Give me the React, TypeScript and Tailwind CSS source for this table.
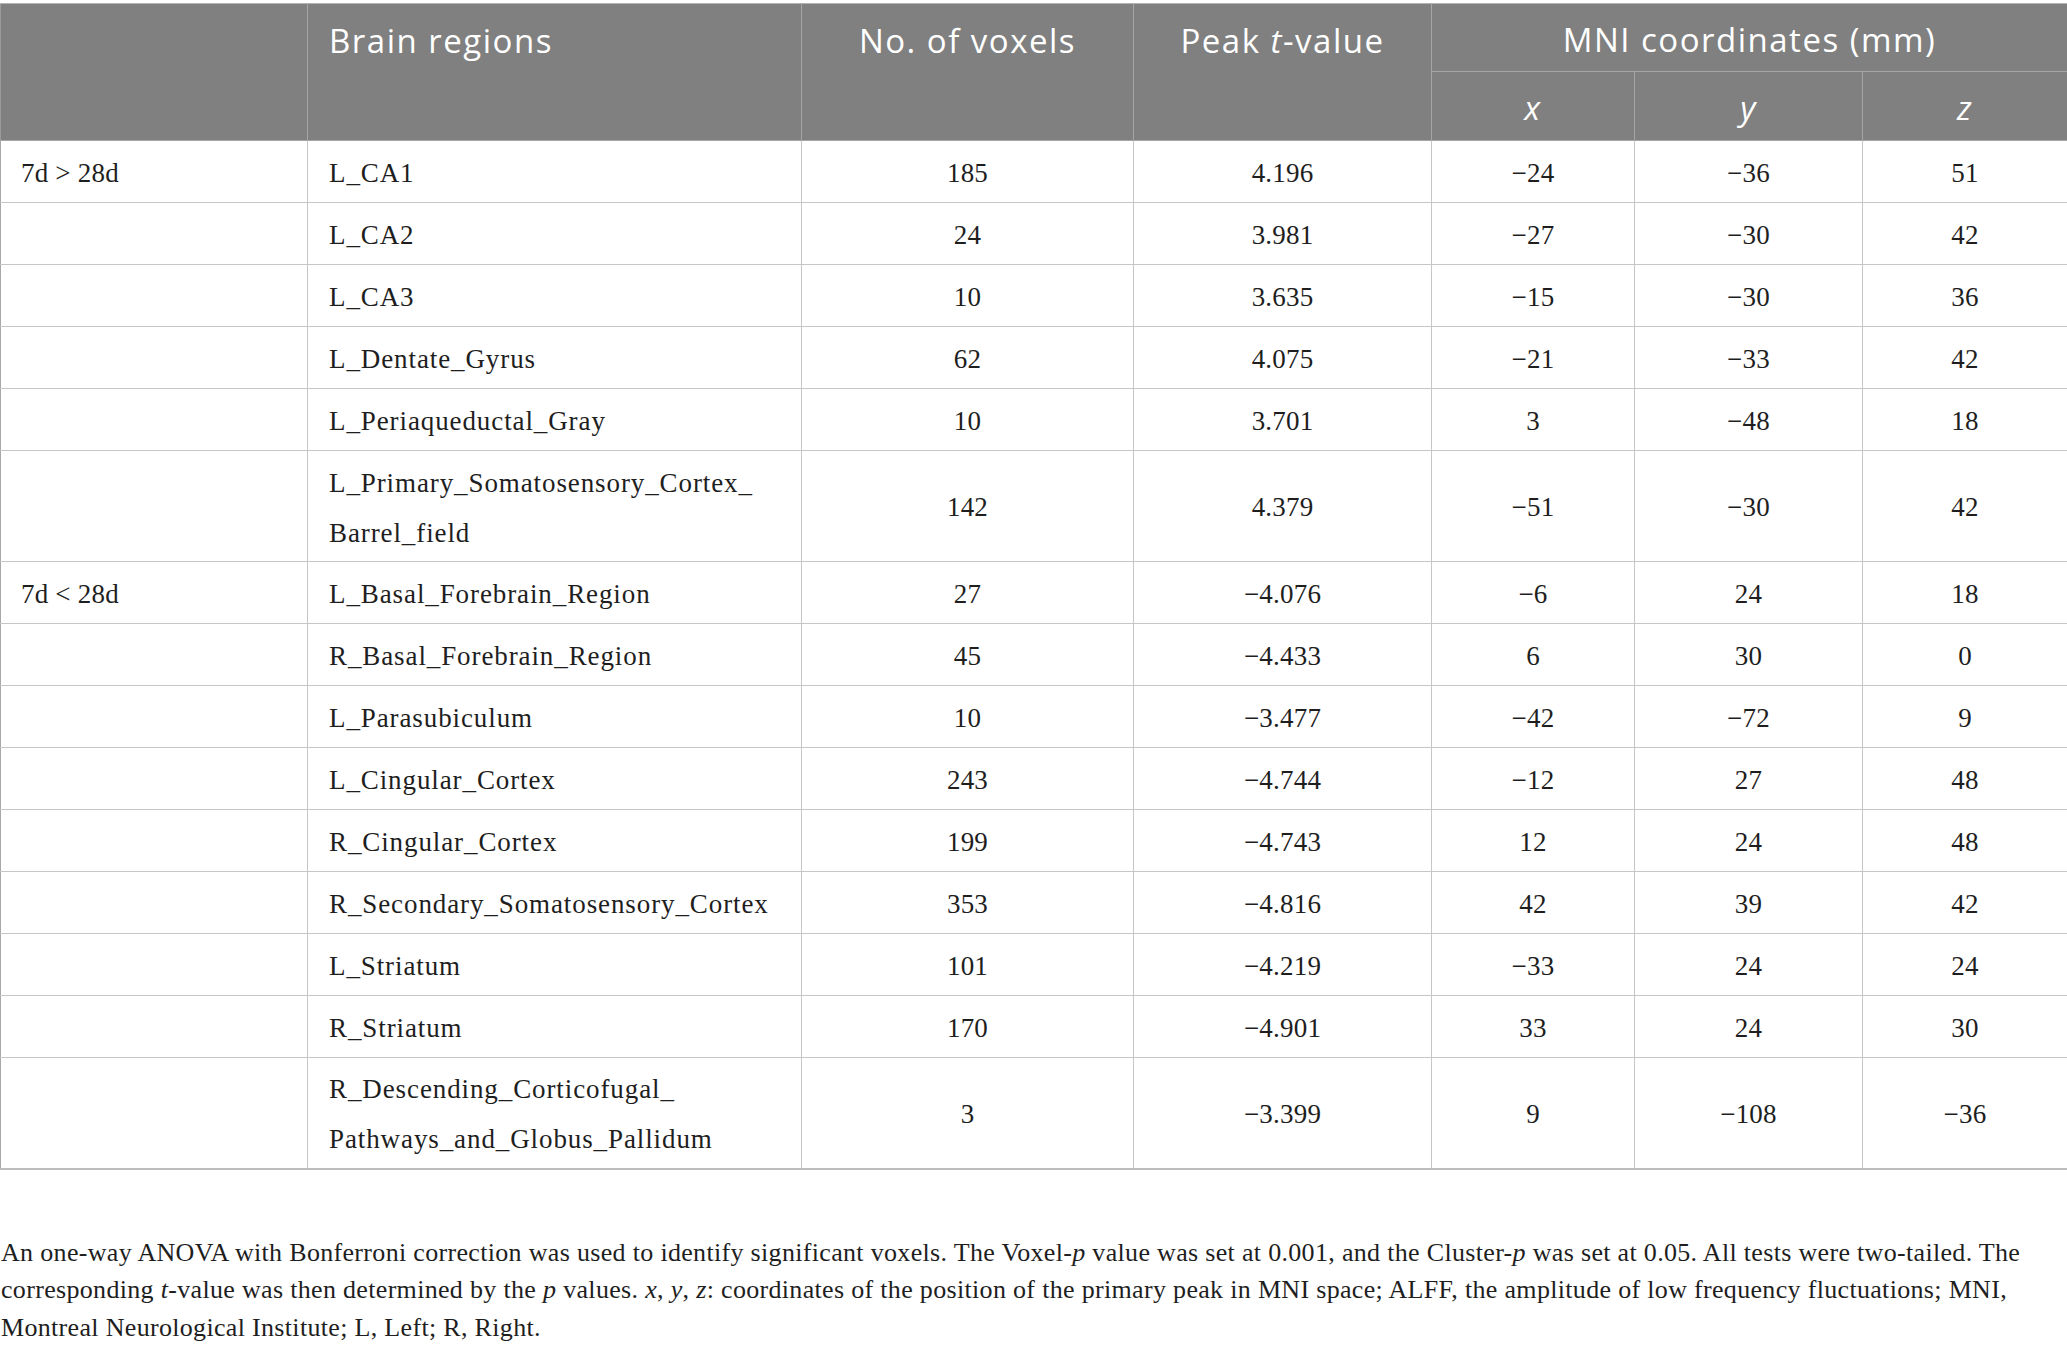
const rows = [
  { g: "7d > 28d", r: ["L_CA1"], n: "185", t: "4.196", x: "−24", y: "−36", z: "51" },
  { g: "", r: ["L_CA2"], n: "24", t: "3.981", x: "−27", y: "−30", z: "42" },
  { g: "", r: ["L_CA3"], n: "10", t: "3.635", x: "−15", y: "−30", z: "36" },
  { g: "", r: ["L_Dentate_Gyrus"], n: "62", t: "4.075", x: "−21", y: "−33", z: "42" },
  { g: "", r: ["L_Periaqueductal_Gray"], n: "10", t: "3.701", x: "3", y: "−48", z: "18" },
  { g: "", r: ["L_Primary_Somatosensory_Cortex_", "Barrel_field"], n: "142", t: "4.379", x: "−51", y: "−30", z: "42" },
  { g: "7d < 28d", r: ["L_Basal_Forebrain_Region"], n: "27", t: "−4.076", x: "−6", y: "24", z: "18" },
  { g: "", r: ["R_Basal_Forebrain_Region"], n: "45", t: "−4.433", x: "6", y: "30", z: "0" },
  { g: "", r: ["L_Parasubiculum"], n: "10", t: "−3.477", x: "−42", y: "−72", z: "9" },
  { g: "", r: ["L_Cingular_Cortex"], n: "243", t: "−4.744", x: "−12", y: "27", z: "48" },
  { g: "", r: ["R_Cingular_Cortex"], n: "199", t: "−4.743", x: "12", y: "24", z: "48" },
  { g: "", r: ["R_Secondary_Somatosensory_Cortex"], n: "353", t: "−4.816", x: "42", y: "39", z: "42" },
  { g: "", r: ["L_Striatum"], n: "101", t: "−4.219", x: "−33", y: "24", z: "24" },
  { g: "", r: ["R_Striatum"], n: "170", t: "−4.901", x: "33", y: "24", z: "30" },
  { g: "", r: ["R_Descending_Corticofugal_", "Pathways_and_Globus_Pallidum"], n: "3", t: "−3.399", x: "9", y: "−108", z: "−36" },
];

export default function App() {
  return (
    <div className="bg-white w-[2067px] min-h-[1348px] pt-[3px] font-['Liberation_Serif',serif] text-[#1e1e1e]">
      <table className="table-fixed border-collapse w-[2067px]">
        <colgroup>
          <col className="w-[307px]" />
          <col className="w-[494px]" />
          <col className="w-[332px]" />
          <col className="w-[298px]" />
          <col className="w-[203px]" />
          <col className="w-[228px]" />
          <col className="w-[205px]" />
        </colgroup>
        <thead className="bg-[#7f807f] text-white font-['Open_Sans',sans-serif] text-[33px] tracking-[1.5px] font-normal">
          <tr className="h-[68px]">
            <th rowSpan={2} className="border border-[#a5a6a5] border-t-[#b4b4b4] border-l-[#9a9a9a] align-top p-0"></th>
            <th rowSpan={2} className="border border-[#a5a6a5] border-t-[#b4b4b4] align-top p-0 font-normal text-left">
              <div className="h-[73px] flex items-center pl-[21px]">Brain regions</div>
            </th>
            <th rowSpan={2} className="border border-[#a5a6a5] border-t-[#b4b4b4] align-top p-0 font-normal">
              <div className="h-[73px] flex items-center justify-center">No. of voxels</div>
            </th>
            <th rowSpan={2} className="border border-[#a5a6a5] border-t-[#b4b4b4] align-top p-0 font-normal">
              <div className="h-[73px] flex items-center justify-center">
                Peak&nbsp;<i>t</i>-value
              </div>
            </th>
            <th colSpan={3} className="border border-[#a5a6a5] border-t-[#b4b4b4] pt-[4px] font-normal">
              MNI coordinates (mm)
            </th>
          </tr>
          <tr className="h-[69px]">
            <th className="border border-[#a5a6a5] pt-[4px] font-normal italic">x</th>
            <th className="border border-[#a5a6a5] pt-[4px] font-normal italic">y</th>
            <th className="border border-[#a5a6a5] pt-[4px] font-normal italic">z</th>
          </tr>
        </thead>
        <tbody className="text-[27px] tracking-[0.2px]">
          {rows.map((row, i) => (
            <tr
              key={i}
              className={
                (row.r.length > 1 ? "h-[111px]" : "h-[62px]") +
                (i === rows.length - 1 ? " border-b-2 border-b-[#bdbdbd]" : "")
              }
            >
              <td className="border border-[#c6c6c6] border-l-[#a8a8a8] pl-[20px] pt-[3px] p-0">{row.g}</td>
              <td className="border border-[#c6c6c6] pl-[21px] pt-[3px] p-0 leading-[50px] tracking-[0.9px]">
                {row.r.map((l) => (
                  <div key={l}>{l}</div>
                ))}
              </td>
              <td className="border border-[#c6c6c6] pt-[3px] p-0 text-center">{row.n}</td>
              <td className="border border-[#c6c6c6] pt-[3px] p-0 text-center">{row.t}</td>
              <td className="border border-[#c6c6c6] pt-[3px] p-0 text-center">{row.x}</td>
              <td className="border border-[#c6c6c6] pt-[3px] p-0 text-center">{row.y}</td>
              <td className="border border-[#c6c6c6] border-r-[#a8a8a8] pt-[3px] p-0 text-center">{row.z}</td>
            </tr>
          ))}
        </tbody>
      </table>
      <p className="mt-[64px] text-[26px] leading-[37.5px] tracking-[0.32px] pl-[1px]">
        An one-way ANOVA with Bonferroni correction was used to identify significant voxels. The Voxel-<i>p</i> value was set at 0.001, and the Cluster-<i>p</i> was set at 0.05. All tests were two-tailed. The
        <br />
        corresponding <i>t</i>-value was then determined by the <i>p</i> values. <i>x</i>, <i>y</i>, <i>z</i>: coordinates of the position of the primary peak in MNI space; ALFF, the amplitude of low frequency fluctuations; MNI,
        <br />
        Montreal Neurological Institute; L, Left; R, Right.
      </p>
    </div>
  );
}
